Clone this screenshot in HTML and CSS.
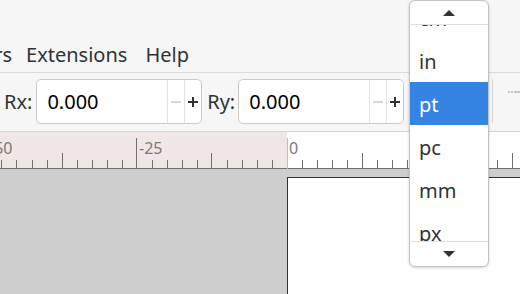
FILE: index.html
```html
<!DOCTYPE html>
<html lang="en">
<head>
  <meta charset="UTF-8">
  <title>Inkscape - Rect toolbar</title>
  <link rel="stylesheet" href="styles.css">
</head>
<body>
  <!-- menu bar -->
  <div class="menubar">
    <div class="menu-items">
      <span class="menu-item first">Filters</span>
      <span class="menu-item">Extensions</span>
      <span class="menu-item">Help</span>
    </div>
  </div>

  <!-- tool controls -->
  <div class="toolbar">
    <span class="label">Rx:</span>
    <div class="spin">
      <span class="spin-value">0.000</span>
      <span class="spin-btn minus"><svg width="10" height="10" viewBox="0 0 10 10"><path d="M0 5h10" stroke="#c9c9c9" stroke-width="1.5"/></svg></span>
      <span class="spin-btn plus"><svg width="10" height="10" viewBox="0 0 10 10"><path d="M0 5h10M5 0v10" stroke="#2e3436" stroke-width="2"/></svg></span>
    </div>
    <span class="label label-ry">Ry:</span>
    <div class="spin">
      <span class="spin-value">0.000</span>
      <span class="spin-btn minus"><svg width="10" height="10" viewBox="0 0 10 10"><path d="M0 5h10" stroke="#c9c9c9" stroke-width="1.5"/></svg></span>
      <span class="spin-btn plus"><svg width="10" height="10" viewBox="0 0 10 10"><path d="M0 5h10M5 0v10" stroke="#2e3436" stroke-width="2"/></svg></span>
    </div>
    <span class="sep"></span>
    <span class="tool-icon"></span>
  </div>

  <!-- horizontal ruler -->
  <div class="ruler">
    <svg width="520" height="37" viewBox="0 0 520 37">
      <rect x="0" y="0" width="287" height="37" fill="#efe7e5"/>
      <rect x="287" y="0" width="233" height="37" fill="#ffffff"/>
      <g stroke="#707070" stroke-width="1">
        <path d="M1.5 28v9M16.5 28v9M32.5 28v9M47.5 28v9M62.5 21v16M77.5 28v9M92.5 28v9M107.5 28v9M122.5 28v9M136.5 6v31"/>
        <path d="M152.5 28v9M167.5 28v9M182.5 28v9M197.5 28v9M211.5 21v16M227.5 28v9M242.5 28v9M257.5 28v9M272.5 28v9"/>
        <path d="M302.5 28v9M317.5 28v9M332.5 28v9M347.5 28v9M362.5 21v16M377.5 28v9M392.5 28v9M407.5 28v9M422.5 28v9M437.5 6v31"/>
        <path d="M452.5 28v9M467.5 28v9M482.5 28v9M497.5 28v9M512.5 21v16"/>
        <path d="M0 36.5h520"/>
      </g>
      <path d="M287.5 6v31" stroke="#c9b9b9" stroke-width="1"/>
      <g class="ruler-text">
        <text x="-11" y="22">-50</text>
        <text x="139" y="22">-25</text>
        <text x="289" y="22">0</text>
        <text x="440" y="22">25</text>
      </g>
    </svg>
  </div>

  <!-- canvas -->
  <div class="canvas">
    <div class="page"></div>
  </div>

  <!-- unit dropdown -->
  <div class="popup">
    <div class="popup-arrow">
      <svg width="12" height="6" viewBox="0 0 12 6"><path d="M0 6L6 0L12 6Z" fill="#2e3436"/></svg>
    </div>
    <div class="popup-list">
      <div class="popup-items">
        <div class="popup-item">cm</div>
        <div class="popup-item">in</div>
        <div class="popup-item selected">pt</div>
        <div class="popup-item">pc</div>
        <div class="popup-item">mm</div>
        <div class="popup-item">px</div>
      </div>
    </div>
    <div class="popup-arrow down">
      <svg width="12" height="6" viewBox="0 0 12 6"><path d="M0 0L12 0L6 6Z" fill="#2e3436"/></svg>
    </div>
  </div>
</body>
</html>
```

FILE: styles.css
```css
body {
  margin: 0;
  width: 520px;
  height: 294px;
  overflow: hidden;
  position: relative;
  background-color: #f6f6f6;
  font-family: 'Noto Sans', 'Open Sans', sans-serif;
  font-size: 20px;
  color: #2e3436;
}

.menubar {
  height: 73px;
  box-sizing: border-box;
  padding-top: 41px;
  border-bottom: 1px solid #dcdad8;
  overflow: hidden;
  line-height: 27px;
}

.menu-items {
  display: flex;
  margin-left: -54px;
}

.menu-item {
  padding: 0 9px;
  white-space: nowrap;
}

.menu-item.first {
  padding-right: 5px;
}

.toolbar {
  height: 59px;
  box-sizing: border-box;
  border-bottom: 1px solid #d8d4d0;
  display: flex;
  align-items: flex-start;
  padding: 6px 0 0 4px;
}

.label {
  line-height: 45px;
  margin-right: 4px;
}

.label-ry {
  margin-left: 5px;
  margin-right: 3px;
}

.spin {
  width: 166px;
  height: 45px;
  box-sizing: border-box;
  display: flex;
  background-color: #fff;
  border: 1px solid #cfc9c4;
  border-radius: 5px;
}

.spin-value {
  flex: 1;
  padding-left: 10px;
  line-height: 43px;
  color: #000;
}

.spin-btn {
  width: 17px;
  box-sizing: border-box;
  border-left: 1px solid #e6e2de;
  display: flex;
  align-items: center;
  justify-content: center;
}

.sep {
  width: 1px;
  height: 44px;
  margin-left: 88px;
  background-color: #dcd8d4;
}

.tool-icon {
  width: 12px;
  height: 2px;
  margin: 12px 0 0 15px;
  background: linear-gradient(to right, #eab2cc 0, #eab2cc 2px, transparent 2px, transparent 3px, #eab2cc 3px, #eab2cc 5px, transparent 5px, transparent 6px, #c8c8c8 6px);
}

.ruler {
  height: 37px;
}

.ruler svg {
  display: block;
}

.ruler-text {
  font-family: 'Noto Sans', sans-serif;
  font-size: 16px;
  fill: #7a7a7a;
}

.canvas {
  height: 125px;
  background-color: #cecece;
  padding: 8px 0 0 287px;
  box-sizing: border-box;
}

.page {
  height: 117px;
  background-color: #fff;
  border-top: 1px solid #333;
  border-left: 1px solid #333;
  box-sizing: border-box;
}

/* dropdown for units */
.popup {
  position: absolute;
  left: 409px;
  top: 0;
  width: 80px;
  height: 267px;
  box-sizing: border-box;
  background-color: #fff;
  border: 1px solid #c6c2be;
  border-radius: 6px;
  box-shadow: 0 1px 3px rgba(0, 0, 0, 0.18);
  overflow: hidden;
}

.popup-arrow {
  height: 24px;
  box-sizing: border-box;
  border-bottom: 1px solid #e2e0de;
  display: flex;
  justify-content: center;
  padding-top: 9px;
}

.popup-arrow svg {
  display: block;
}

.popup-arrow.down {
  height: 25px;
  border-bottom: none;
  border-top: 1px solid #e2e0de;
  padding-top: 9px;
}

.popup-list {
  height: 216px;
  overflow: hidden;
}

.popup-items {
  margin-top: -29px;
}

.popup-item {
  height: 43px;
  box-sizing: border-box;
  padding: 3px 0 0 9px;
  line-height: 40px;
  color: #2e3436;
}

.popup-item.selected {
  background-color: #3584e4;
  color: #fff;
}
```
